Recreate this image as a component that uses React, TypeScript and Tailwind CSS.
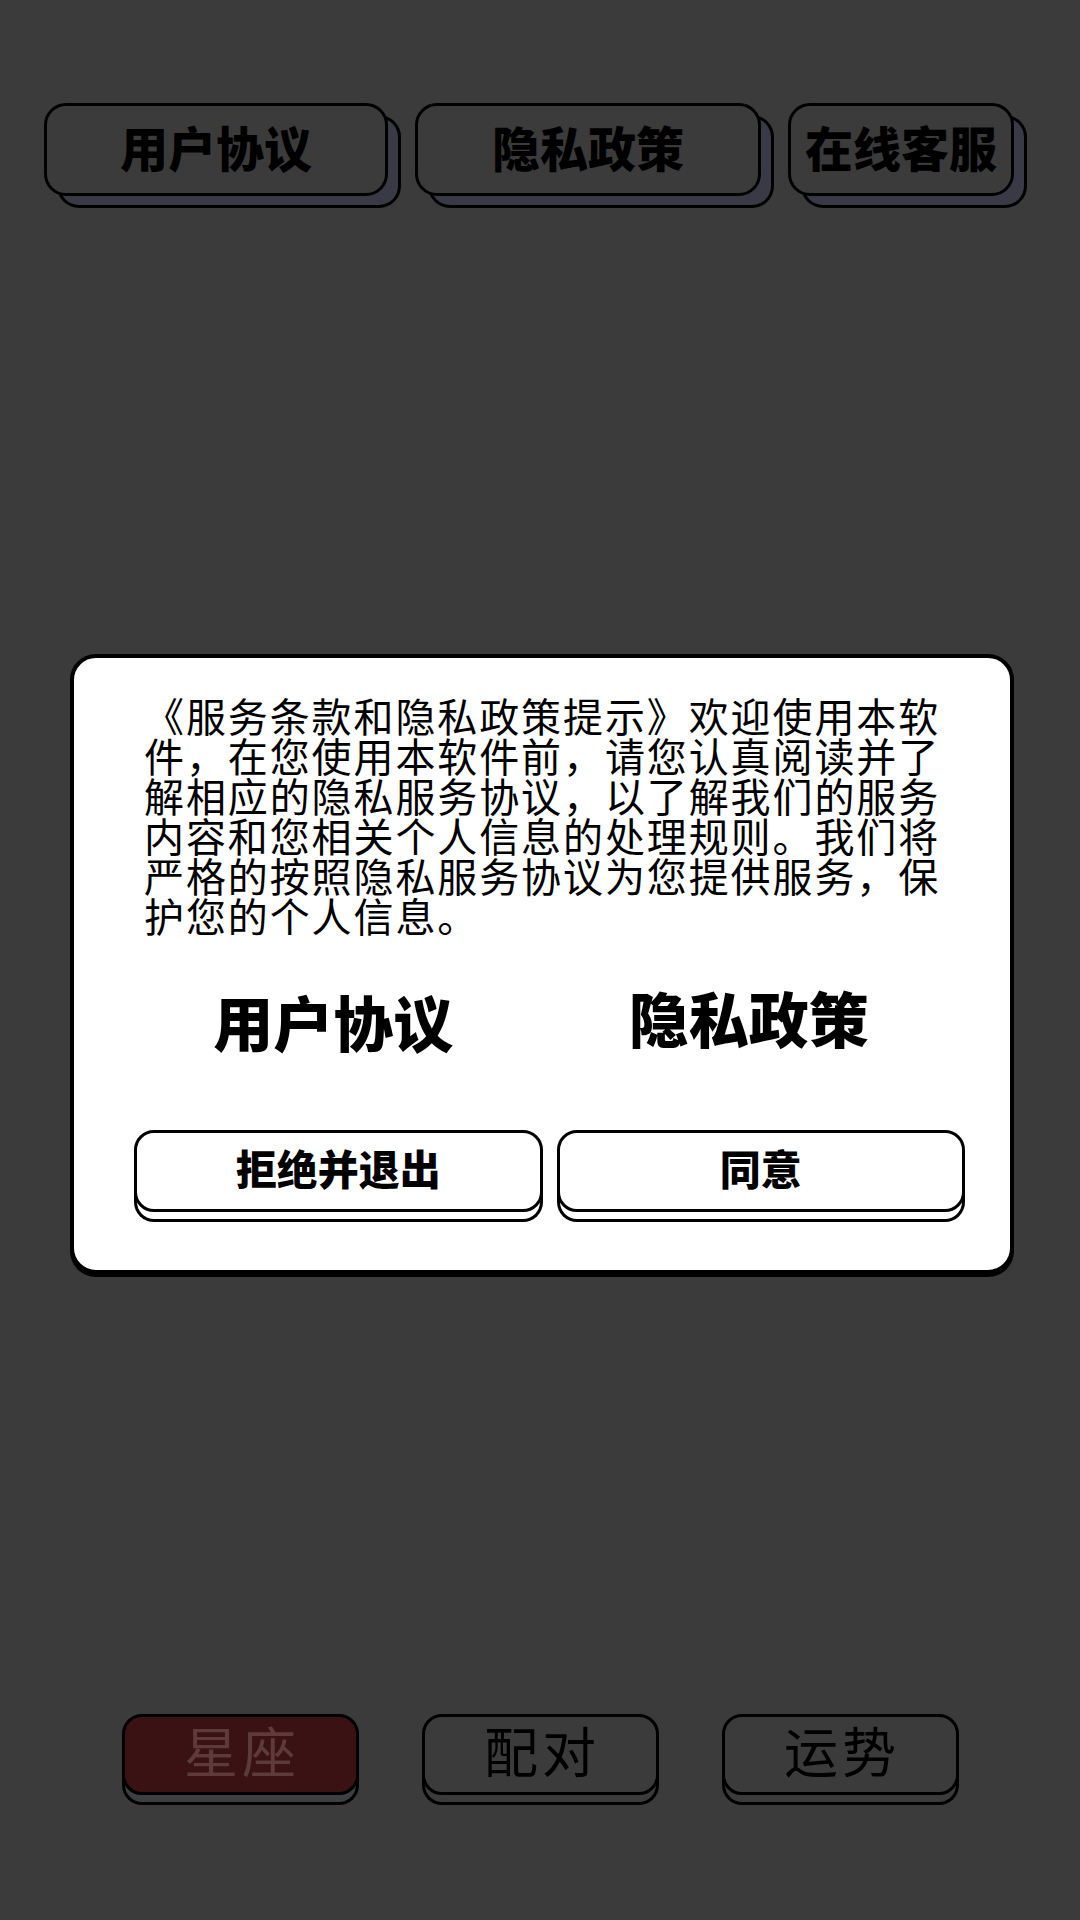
export default function App() {
  const cjk = "font-['Noto_Sans_CJK_SC','Noto_Sans',sans-serif]";

  return (
    <div className={`w-[1080px] h-[1920px] bg-[#3b3b3b] flex flex-col overflow-hidden ${cjk}`}>
      {/* top links */}
      <div className="flex gap-[27px] pl-[44px] pt-[103px]">
        <button className="w-[344px] h-[93px] rounded-[22px] border-[3px] border-black bg-[#3b3b3b] shadow-[13px_12px_0_-3px_#393a45,13px_12px_0_0_#000] flex items-center justify-center text-[48px] font-black text-black leading-none">
          <span className="-translate-y-[4px]">用户协议</span>
        </button>
        <button className="w-[346px] h-[93px] rounded-[22px] border-[3px] border-black bg-[#3b3b3b] shadow-[13px_12px_0_-3px_#393a45,13px_12px_0_0_#000] flex items-center justify-center text-[48px] font-black text-black leading-none">
          <span className="-translate-y-[4px]">隐私政策</span>
        </button>
        <button className="w-[226px] h-[93px] rounded-[22px] border-[3px] border-black bg-[#3b3b3b] shadow-[13px_12px_0_-3px_#393a45,13px_12px_0_0_#000] flex items-center justify-center text-[48px] font-black text-black leading-none">
          <span className="-translate-y-[4px]">在线客服</span>
        </button>
      </div>

      {/* dialog */}
      <div className="ml-[70px] mt-[458px] w-[944px] h-[620px] rounded-[26px] border-4 border-black bg-white shadow-[0_3px_0_0_#000] flex flex-col">
        <p className="w-[800px] ml-[70px] mt-[37px] text-[40px] leading-[40px] tracking-[1.9px] text-black font-normal">
          《服务条款和隐私政策提示》欢迎使用本软件，在您使用本软件前，请您认真阅读并了解相应的隐私服务协议，以了解我们的服务内容和您相关个人信息的处理规则。我们将严格的按照隐私服务协议为您提供服务，保护您的个人信息。
        </p>

        <div className="grid grid-cols-2 gap-[14px] pl-[60px] pr-[45px] mt-[56px]">
          <div className="flex justify-center text-[60px] leading-none font-black text-black -translate-x-[5px]">用户协议</div>
          <div className="flex justify-center text-[60px] leading-none font-black text-black -translate-x-[12px] -translate-y-[4px]">
            隐私政策
          </div>
        </div>

        <div className="grid grid-cols-2 gap-[14px] pl-[60px] pr-[45px] mt-[79px]">
          <button className="h-[82px] rounded-[20px] border-[3px] border-black bg-white shadow-[0_10px_0_-3px_#fff,0_10px_0_0_#000] flex items-center justify-center text-[41px] font-black text-black leading-none">
            <span className="-translate-y-[4px]">拒绝并退出</span>
          </button>
          <button className="h-[82px] rounded-[20px] border-[3px] border-black bg-white shadow-[0_10px_0_-3px_#fff,0_10px_0_0_#000] flex items-center justify-center text-[41px] font-black text-black leading-none">
            <span className="-translate-y-[4px]">同意</span>
          </button>
        </div>
      </div>

      {/* bottom tabs */}
      <div className="flex justify-center gap-[63px] mt-[440px]">
        <button className="w-[237px] h-[81px] rounded-[20px] border-[3px] border-black bg-[#3a1214] shadow-[0_10px_0_-3px_#3c4040,0_10px_0_0_#000] flex items-center justify-center text-[54px] font-normal text-[#5e3b3b] leading-none tracking-[4px]">
          <span className="-translate-y-[5px] pl-[4px]">星座</span>
        </button>
        <button className="w-[237px] h-[81px] rounded-[20px] border-[3px] border-black bg-[#3b3b3b] shadow-[0_10px_0_-3px_#3b3b3b,0_10px_0_0_#000] flex items-center justify-center text-[54px] font-normal text-black leading-none tracking-[4px]">
          <span className="-translate-y-[5px] pl-[4px]">配对</span>
        </button>
        <button className="w-[237px] h-[81px] rounded-[20px] border-[3px] border-black bg-[#3b3b3b] shadow-[0_10px_0_-3px_#3b3b3b,0_10px_0_0_#000] flex items-center justify-center text-[54px] font-normal text-black leading-none tracking-[4px]">
          <span className="-translate-y-[5px] pl-[4px]">运势</span>
        </button>
      </div>
    </div>
  );
}
